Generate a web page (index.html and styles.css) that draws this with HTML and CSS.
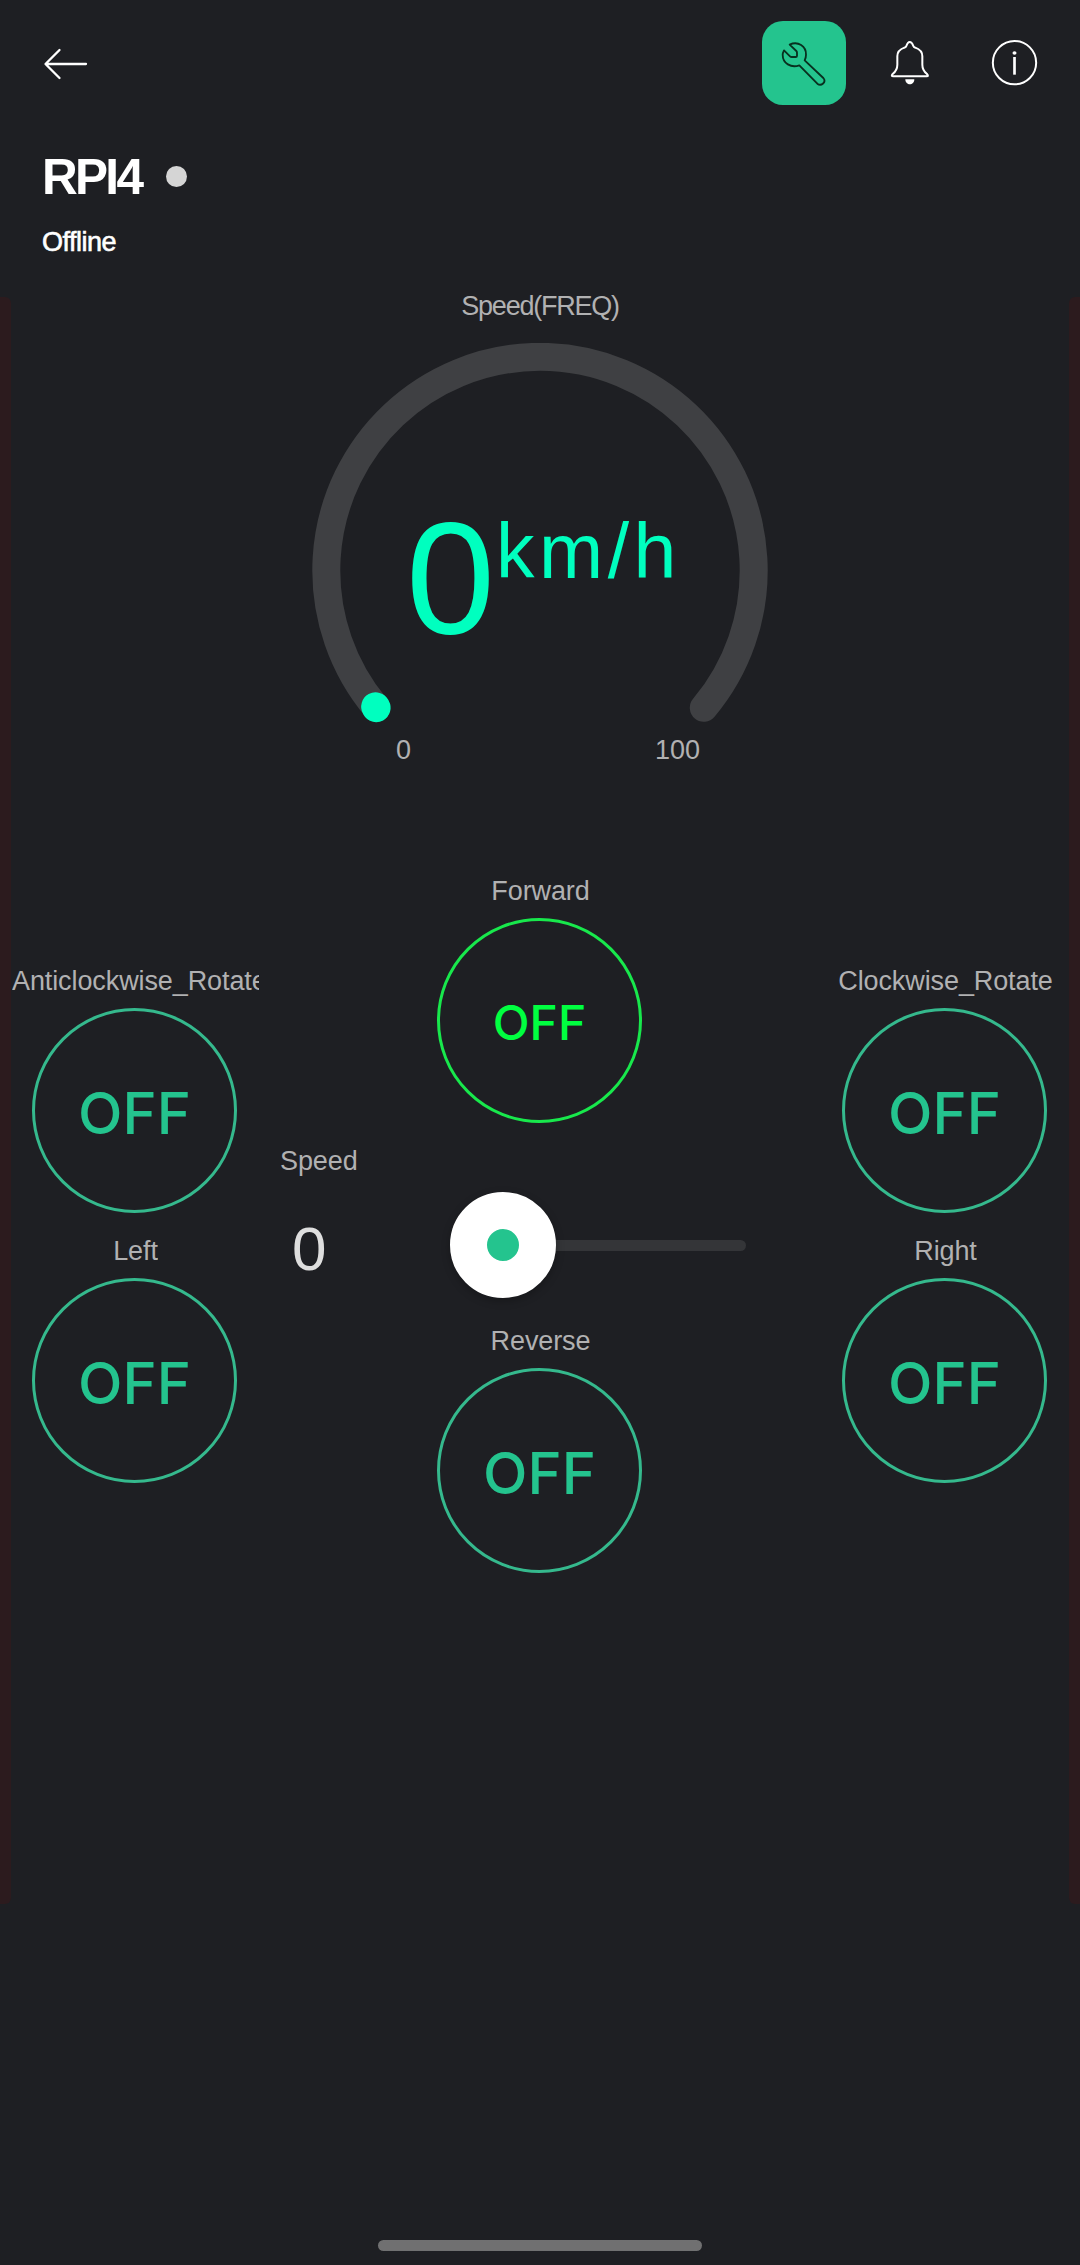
FILE: index.html
```html
<!DOCTYPE html>
<html lang="en">
<head>
<meta charset="utf-8">
<title>RPI4</title>
<link rel="stylesheet" href="styles.css">
</head>
<body>
<div class="screen">
  <header class="toolbar">
    <svg class="back" viewBox="0 0 48 36" fill="none" stroke="#fff" stroke-width="2.3" stroke-linecap="round" stroke-linejoin="round"><path d="M44 18H4M17.500 4L3.500 18L17.500 32"/></svg>
    <nav class="actions">
      <div class="action active">
        <svg viewBox="66 63 252 252" fill="none" stroke="#08301f" stroke-width="5.500" stroke-linejoin="round"><path d="M149 134C174 122 199 139 198 164C198 171 196 177 194 181L250 234C260 246 244 260 232 251L178 196C153 205 128 190 128 164C128 159 130 155 132 151L150 169Q152 171 155 171H167Q171 171 171 167V158Q171 155 169 153Z"/></svg>
      </div>
      <div class="action">
        <svg viewBox="381 63 252 252" fill="none" stroke="#fff" stroke-width="6" stroke-linejoin="round"><path d="M509 126C503 126 501 132 499 138Q498 142 493 143C479 148 472 156 472 169V194C472 207 468 214 458 222Q452 229 460 229H560Q567 229 561 222C551 214 547 207 547 194V169C547 156 540 148 526 143Q521 142 520 138C518 132 515 126 509 126Z"/><path d="M496 238H523C523 258 496 258 496 238Z" fill="#fff" stroke="none"/></svg>
      </div>
      <div class="action">
        <svg viewBox="696 63 252 252"><circle cx="823.500" cy="188" r="65" fill="none" stroke="#fff" stroke-width="6"/><ellipse cx="823.500" cy="159" rx="6" ry="5.500" fill="#fff"/><path d="M823.500 171V224" stroke="#fff" stroke-width="8"/></svg>
      </div>
    </nav>
  </header>

  <section class="device">
    <div class="title-row"><h1 class="title">RPI4</h1><span class="status-dot"></span></div>
    <p class="status">Offline</p>
  </section>

  <main class="board">
    <section class="gauge">
      <p class="label gauge-label">Speed(FREQ)</p>
      <div class="dial">
        <svg class="arc" viewBox="0 0 456 402" fill="none" stroke-linecap="round">
          <path d="M64.200 364.800A213.700 213.700 0 1 1 391.800 364.800" stroke="#3f4043" stroke-width="28"/>
          <path d="M63.600 363.700L64.200 364.800" stroke="#00ffbf" stroke-width="28.800"/>
        </svg>
        <div class="reading"><span class="number">0</span><span class="unit">km/h</span></div>
      </div>
      <div class="scale"><span>0</span><span>100</span></div>
    </section>

    <section class="controls">
      <div class="control forward"><p class="label">Forward</p><div class="knob">OFF</div></div>
      <div class="control anticlockwise"><p class="label">Anticlockwise_Rotate</p><div class="knob">OFF</div></div>
      <div class="control clockwise"><p class="label">Clockwise_Rotate</p><div class="knob">OFF</div></div>
      <div class="speed">
        <p class="label">Speed</p>
        <div class="slider">
          <span class="value">0</span>
          <div class="track"><div class="thumb"></div></div>
        </div>
      </div>
      <div class="control left"><p class="label">Left</p><div class="knob">OFF</div></div>
      <div class="control right"><p class="label">Right</p><div class="knob">OFF</div></div>
      <div class="control reverse"><p class="label">Reverse</p><div class="knob">OFF</div></div>
    </section>
  </main>

  <footer class="home"><div class="home-bar"></div></footer>
</div>
</body>
</html>
```
FILE: styles.css
```css
* { box-sizing: border-box; }

body {
  margin: 0;
  background: #1e1f23;
  color: #fff;
  font-family: "Liberation Sans", Arial, sans-serif;
}

h1, p { margin: 0; }
svg { display: block; }

.screen {
  display: flex;
  flex-direction: column;
  width: 1080px;
  height: 2265px;
  overflow: hidden;
}

/* Top bar */
.toolbar {
  display: flex;
  justify-content: space-between;
  align-items: flex-start;
  height: 126px;
  padding: 21px 24px 0 42px;
}
.back { width: 48px; height: 36px; margin-top: 25px; }
.actions { display: flex; gap: 21px; }
.action { width: 84px; height: 84px; border-radius: 21px; }
.action.active { background: #24c48e; }

/* Device name and state */
.device { height: 171px; padding: 20px 41px 0; }
.title-row { display: flex; align-items: center; gap: 25px; height: 60px; }
.title { padding: 1px 0 0 1px; font-size: 49.500px; line-height: 60px; letter-spacing: -2.700px; }
.status-dot { width: 21px; height: 21px; border-radius: 50%; background: #d5d5d5; }
.status {
  margin-top: 19px;
  padding-left: 1px;
  font-size: 27px;
  line-height: 34px;
  letter-spacing: -.500px;
  -webkit-text-stroke: .6px currentColor;
}

/* Widget canvas with its out-of-page margins */
.board { position: relative; height: 1607px; }
.board::before, .board::after {
  content: "";
  position: absolute;
  top: 0;
  bottom: 0;
  width: 11px;
  background: #2c1b1e;
}
.board::before { left: 0; border-radius: 0 6px 6px 0; }
.board::after { right: 0; border-radius: 6px 0 0 6px; }

.label {
  color: #b1b1b2;
  font-size: 27px;
  line-height: 30px;
  letter-spacing: -.100px;
  white-space: nowrap;
}

/* Gauge */
.gauge {
  display: flex;
  flex-direction: column;
  align-items: center;
  height: 570px;
}
.gauge-label { margin-top: -6px; letter-spacing: -1.250px; }
.dial {
  display: grid;
  width: 456px;
  height: 402px;
  margin-top: 21.500px;
}
.dial > * { grid-area: 1 / 1; }
.arc { width: 456px; height: 402px; }
.reading {
  display: flex;
  align-items: flex-start;
  padding: 143px 0 0 94px;
  color: #00ffbf;
}
.number { width: 90px; margin-top: 3px; font-size: 160px; line-height: 178px; }
.unit { font-size: 77px; line-height: 90px; letter-spacing: 4.500px; margin-top: 20px; }
.scale {
  display: flex;
  justify-content: space-between;
  width: 304px;
  margin: -10px 0 0 16px;
  color: #b1b1b2;
  font-size: 27px;
  line-height: 30px;
}

/* Buttons */
.controls {
  display: grid;
  grid-template-columns: repeat(8, 135px);
  grid-template-rows: repeat(8, 90px);
}
.control {
  display: flex;
  flex-direction: column;
  align-items: center;
  padding: 9px 11px 0 12px;
}
.control .label { max-width: 100%; overflow: hidden; }
.knob {
  display: flex;
  align-items: center;
  justify-content: center;
  width: 205px;
  height: 205px;
  margin: 12px 2px 0 0;
  padding-top: 4px;
  border: 3px solid #35b98d;
  border-radius: 50%;
  color: #24c48e;
  font: 500 58px/70px Inter, sans-serif;
}
.forward { grid-area: 1 / 4 / span 3 / span 2; }
.forward .knob { border-color: #18e84c; color: #00ff40; font-size: 48px; }
.anticlockwise { grid-area: 2 / 1 / span 3 / span 2; }
.clockwise { grid-area: 2 / 7 / span 3 / span 2; }
.left { grid-area: 5 / 1 / span 3 / span 2; }
.right { grid-area: 5 / 7 / span 3 / span 2; }
.reverse { grid-area: 6 / 4 / span 3 / span 2; }

/* Slider */
.speed { grid-area: 4 / 3 / span 2 / span 4; padding: 9px 0 0 10px; }
.slider {
  display: flex;
  align-items: center;
  height: 106px;
  margin-top: 16px;
}
.value {
  width: 170px;
  padding: 8px 0 0 12px;
  color: #dedede;
  font-size: 62px;
  line-height: 70px;
}
.track {
  display: flex;
  align-items: center;
  width: 296px;
  height: 11px;
  margin-top: 1px;
  border-radius: 6px;
  background: #343538;
}
.thumb {
  flex: none;
  width: 106px;
  height: 106px;
  margin-top: -1px;
  border: 37px solid #fff;
  border-radius: 50%;
  background: #24c48e;
  box-shadow: 0 3px 9px rgba(0, 0, 0, .25);
}

/* System navigation handle */
.home { display: flex; justify-content: center; margin-top: auto; padding-bottom: 14px; }
.home-bar { width: 324px; height: 11px; border-radius: 6px; background: #707071; }
```
